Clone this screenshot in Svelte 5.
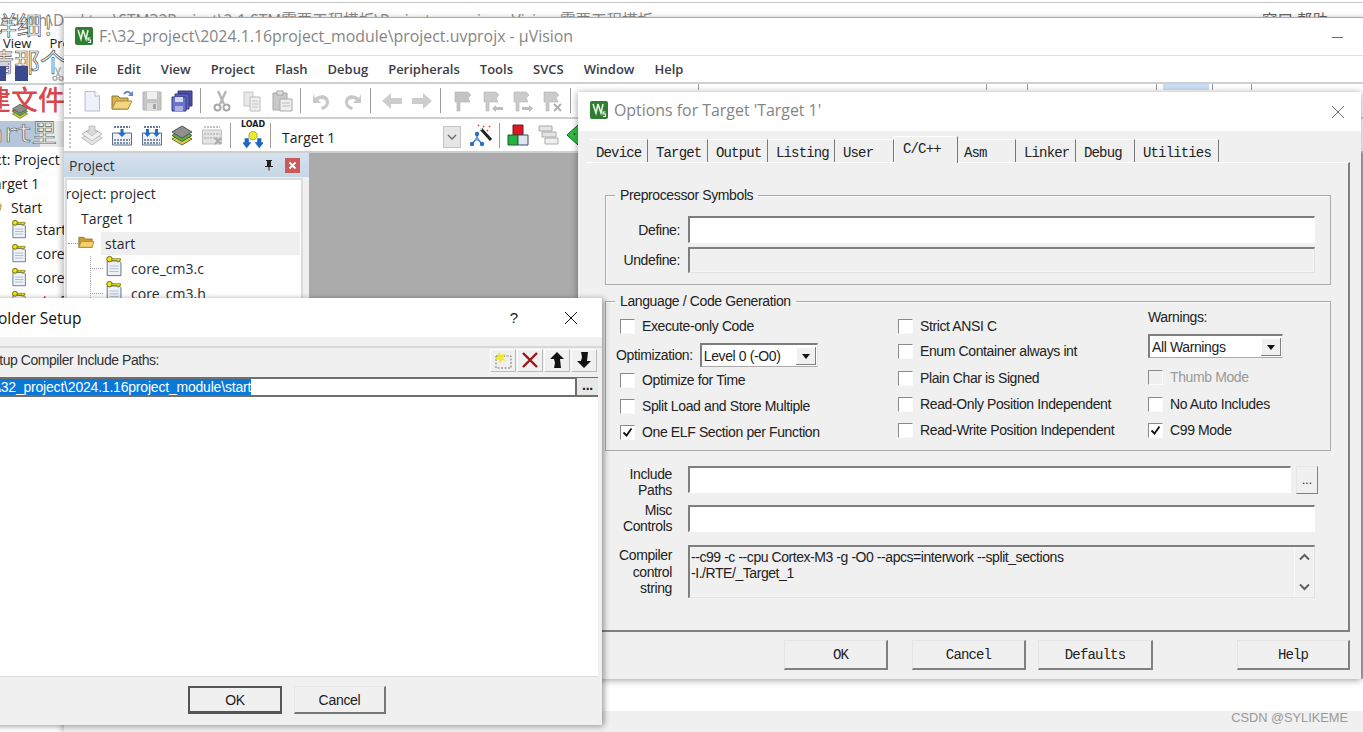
<script>
  const icons = {
    doc: '<path d="M5 2.500h10l4.500 4.500v15H5z" fill="#eef1fa" stroke="#b9bcc6"/><path d="M15 2.500V7h4.500" fill="#fff" stroke="#b9bcc6"/>',
    open: '<path d="M2 20V7h6l2 2h8v11z" fill="#d9b253" stroke="#8d7434"/><path d="M2 20l4-8h16l-4 8z" fill="#f5d67c" stroke="#a38a45"/><path d="M14 5c2-3 5-3 7 0" fill="none" stroke="#5f86c8" stroke-width="2"/><path d="M23 2v5h-5z" fill="#5f86c8"/>',
    save: '<path d="M3 3h18v18H3z" fill="#c4c4c4" stroke="#b2b2b2"/><path d="M7 3h10v7H7z" fill="#efefef"/><path d="M7 14h10v7H7z" fill="#dedede"/><path d="M13 15h3v5h-3z" fill="#a6a6a6"/>',
    saveall: '<path d="M8 2h14v15H8z" fill="#4b4fa8" stroke="#35387e"/><path d="M5 5h14v15H5z" fill="#5f64bd" stroke="#35387e"/><path d="M2 8h14v14H2z" fill="#6d72c9" stroke="#35387e"/><path d="M5 8h8v5H5z" fill="#d6d8f2"/><path d="M5 17h8v5H5z" fill="#adb0e2"/>',
    cut: '<path d="M8 2l6 13M16 2l-6 13" stroke="#b5b5b5" stroke-width="2.400" fill="none"/><circle cx="7.500" cy="18.500" r="3" fill="none" stroke="#a8a8a8" stroke-width="2"/><circle cx="16.500" cy="18.500" r="3" fill="none" stroke="#a8a8a8" stroke-width="2"/>',
    copy: '<path d="M4 3h9v14H4z" fill="#e9e9e9" stroke="#c6c6c6"/><path d="M10 8h10v14H10z" fill="#efefef" stroke="#bcbcbc"/><path d="M12 12h6M12 15h6M12 18h6" stroke="#c2c2c2"/>',
    paste: '<path d="M3 4h14v17H3z" fill="#c9c9c9" stroke="#a9a9a9"/><path d="M7 2h6v4H7z" fill="#e5e5e5" stroke="#a3a3a3"/><path d="M10 10h12v12H10z" fill="#eee" stroke="#a9a9a9"/><path d="M12 14h8M12 17h8" stroke="#bbb"/>',
    undo: '<path d="M5 9c6-5 14-3 14 4 0 4-3 7-7 8l-1-3c3-1 5-2 5-5 0-3-5-4-8-2l3 3H3V5z" fill="#c8c8c8"/>',
    redo: '<path d="M19 9c-6-5-14-3-14 4 0 4 3 7 7 8l1-3c-3-1-5-2-5-5 0-3 5-4 8-2l-3 3h8V5z" fill="#c8c8c8"/>',
    left: '<path d="M2 12l9-8v5h11v6H11v5z" fill="#cdcdcd"/>',
    right: '<path d="M22 12l-9-8v5H2v6h11v5z" fill="#cdcdcd"/>',
    mark: '<path d="M5 3h13l3 3-3 3 2 4H10v9H7V13H5z" fill="#c4c4c4" stroke="#b2b2b2" stroke-width=".6"/>',
    markp: '<path d="M4 3h12l3 3-3 3 2 4H9v9H6V13H4z" fill="#cbcbcb" stroke="#b2b2b2" stroke-width=".6"/><path d="M23 18h-7v-2l-4 3.500 4 3.500v-2h7z" fill="#bdbdbd"/>',
    markn: '<path d="M4 3h12l3 3-3 3 2 4H9v9H6V13H4z" fill="#cbcbcb" stroke="#b2b2b2" stroke-width=".6"/><path d="M12 18h7v-2l4 3.500-4 3.500v-2h-7z" fill="#bdbdbd"/>',
    markx: '<path d="M4 3h12l3 3-3 3 2 4H9v9H6V13H4z" fill="#cbcbcb" stroke="#b2b2b2" stroke-width=".6"/><path d="M14 15l7 7M21 15l-7 7" stroke="#b0b0b0" stroke-width="2"/>',
    xlate: '<path d="M2 15l10-6 10 6-10 7z" fill="#e6e6e6" stroke="#bbb"/><path d="M2 11l10-6 10 6-10 7z" fill="#efefef" stroke="#bbb"/><path d="M9 3h6v5h3l-6 5-6-5h3z" fill="#dadada" stroke="#aaa" stroke-width=".6"/>',
    build: '<path d="M2.500 10h19v12h-19z" fill="#eef2f8" stroke="#5a6f8c"/><path d="M4 4h16" stroke="#6a7a95" stroke-width="2" stroke-dasharray="2 1"/><path d="M4 17h16M4 20h16" stroke="#8090a8" stroke-width="2" stroke-dasharray="2 1"/><path d="M12 14l-4-4h2.500V6h3v4H16z" fill="#1f6fc9"/>',
    rebuild: '<path d="M2.500 10h19v12h-19z" fill="#eef2f8" stroke="#5a6f8c"/><path d="M4 4h16" stroke="#6a7a95" stroke-width="2" stroke-dasharray="2 1"/><path d="M4 17h16M4 20h16" stroke="#8090a8" stroke-width="2" stroke-dasharray="2 1"/><path d="M7.500 14l-3.500-4h2V6h3v4h2zM16.500 14l-3.500-4h2V6h3v4h2z" fill="#1f6fc9"/>',
    batch: '<path d="M2 16l10-6 10 6-10 6z" fill="#d9c84a" stroke="#6b6f2c"/><path d="M2 12.500l10-6 10 6-10 6z" fill="#63a84e" stroke="#3f6e33"/><path d="M2 9l10-6 10 6-10 6z" fill="#8f8f8f" stroke="#555"/>',
    stop: '<path d="M2.500 7h19v14h-19z" fill="#e4e4e4" stroke="#bdbdbd"/><path d="M4 4h16M4 11h16M4 15h16" stroke="#c4c4c4" stroke-width="2" stroke-dasharray="2 1"/><path d="M15 15l6 6M21 15l-6 6" stroke="#aaa" stroke-width="2"/>',
    wand: '<path d="M12 6l10 11" stroke="#222" stroke-width="3"/><path d="M11 6h2" stroke="#ddd" stroke-width="2"/><path d="M14 3l1 1M20 3l1 1M18 7l1 1M9 2l1 1" stroke="#d33" stroke-width="1.600"/><path d="M8 10v5M3 21l5-6 5 6" fill="none" stroke="#2e6fbf" stroke-width="1.400"/><circle cx="8" cy="11" r="2.200" fill="#2e6fbf"/><circle cx="3" cy="21" r="2.200" fill="#2e6fbf"/><circle cx="13" cy="21" r="2.200" fill="#2e6fbf"/><circle cx="8" cy="16" r="1.800" fill="#6ea1da"/>',
    blocks: '<path d="M7 2h10v10H7z" fill="#e3141c" stroke="#5c2530"/><path d="M2 12h10v10H2z" fill="#27b33b" stroke="#1d5a2b"/><path d="M12 12h10v10H12z" fill="#dfe6f0" stroke="#3a4b66"/>',
    books: '<path d="M3 3h13v5H3z" fill="#e4e4e4" stroke="#aaa"/><path d="M6 9h14v5H6z" fill="#e4e4e4" stroke="#aaa"/><path d="M9 15h13v6H9z" fill="#efefef" stroke="#aaa"/>',
    load: '<path d="M12 3a5 5 0 110 10 5 5 0 010-10z" fill="#ecec2a" stroke="#9a9a20"/><path d="M2 11h5v5h3l-5.500 7L-1 16h3zM17 11h5v5h3l-5.500 7L14 16h3z" fill="#1f66c4"/>',
    rhomb: '<path d="M12 2l11 10-11 10L1 12z" fill="#27c43c" stroke="#0e5c1a"/><path d="M8 11h1M12 7h1M12 15h1M16 11h1" stroke="#000" stroke-width="2"/>',
    key: '<path d="M3.500 6.500h13l2 2v14h-15z" fill="#eef1f8" stroke="#55678a"/><path d="M6 12h10M6 15h10M6 18h10" stroke="#b8c0cf" stroke-width="1.200"/><circle cx="6" cy="4.500" r="3" fill="#f5e50c" stroke="#5c5a10"/><path d="M8.500 4h9.500v2h-1.500v1.500h-2V6H8.500z" fill="#f5e50c" stroke="#5c5a10" stroke-width=".7"/>',
    folder: '<path d="M1 16V4h6l2 2h8v10z" fill="#c99a38" stroke="#8a6d2c"/><path d="M1 16l3-7h15l-2 7z" fill="#f6cf6a" stroke="#a8853a"/>',
    tNew: '<path d="M3 6h15v12H3z" fill="none" stroke="#777" stroke-dasharray="2 1.500"/><path d="M6 1l2 4 4-1-2 4 3 3-4-1-2 4-1-4-4-1 3-3z" fill="#ecec2a"/>',
    tDel: '<path d="M3 3l14 14M17 3L3 17" stroke="#9c1616" stroke-width="2.400"/>',
    tUp: '<path d="M10 2l7 7h-4l1 9H7l1-5-1-4H3z" fill="#111"/>',
    tDown: '<path d="M10 18l7-7h-4l1-9H7l1 5-1 4H3z" fill="#111"/>'
  };
  const groups1 = [['doc','open','save','saveall'],['cut','copy','paste'],['undo','redo'],['left','right'],['mark','markp','markn','markx']];
  const hidden = [118, 287, 40, 128, 6, 3, 38];
  const tabs = [['Device',58],['Target',60],['Output',60],['Listing',67],['User',59],['C/C++',64],['Asm',58],['Linker',60],['Debug',59],['Utilities',84]];
  const menu = ['File','Edit','View','Project','Flash','Debug','Peripherals','Tools','SVCS','Window','Help'];
</script>

{#snippet ic(name, size = 24)}
  <svg class="ic" width={size} height={size} viewBox="0 0 24 24" aria-hidden="true">{@html icons[name]}</svg>
{/snippet}

{#snippet tool(name)}
  <svg class="ic" width="20" height="20" viewBox="0 0 20 20" aria-hidden="true">{@html icons[name]}</svg>
{/snippet}

{#snippet logo()}
  <svg class="logo" width="18" height="18" viewBox="0 0 18 18" aria-hidden="true">
    <rect width="18" height="18" rx="2" fill="#2f7d32"/>
    <path d="M3 3l3 9 2-9M8 3l3 9 2-9" fill="none" stroke="#dff0d8" stroke-width="1.600"/>
    <path d="M15.500 11h-2.500v2h2.500v2.500H13" fill="none" stroke="#fff" stroke-width="1.100"/>
  </svg>
{/snippet}

{#snippet check(label, on = false, off = false)}
  <div class="chk" class:off>
    <span class="box">{#if on}<svg width="11" height="11" viewBox="0 0 11 11" aria-hidden="true"><path d="M1.500 5.500l3 3 5-7" fill="none" stroke="#111" stroke-width="1.800"/></svg>{/if}</span>
    <span>{label}</span>
  </div>
{/snippet}

<div class="desktop">
  <!-- window behind everything -->
  <div class="back">
    <div class="back-rule"></div>
    <div class="back-title">C:\Users\Admin\Desktop\STM32Project\2-1 STM需要工程模板\Project.uvprojx - µVision</div>
    <div class="back-extra a">需要工程模板</div>
    <div class="back-extra b">窗口 帮助</div>
    <div class="back-menu"><span>View</span><span>Project</span></div>
    <div class="cap c1">详细！</div>
    <div class="cap c2">清那个</div>
    <div class="strip-icons">
      <span class="mini"></span><span class="mini"></span>
      <span class="backcut">{@render ic('cut', 16)}</span>
    </div>
    <div class="back-line"></div>
    <div class="cap c3">建文件</div>
    <div class="cross">{@render ic('batch', 18)}</div>
    <div class="cap c4">Start里</div>
    <div class="back-tree">
      <div class="bt t1">Project: Project</div>
      <div class="bt t2">Target 1</div>
      <div class="bt t3">{@render ic('folder', 17)}<span>Start</span></div>
      <div class="bt t4">{@render ic('key', 20)}<span>startup</span></div>
      <div class="bt t5">{@render ic('key', 20)}<span>core_cm3</span></div>
      <div class="bt t6">{@render ic('key', 20)}<span>core_cm3</span></div>
      <div class="bt t7">{@render ic('key', 20)}<span>stm32</span></div>
    </div>
  </div>

  <!-- µVision main window -->
  <section class="main">
    <header class="titlebar">
      {@render logo()}
      <span class="titletext">F:\32_project\2024.1.16project_module\project.uvprojx - µVision</span>
      <span class="minimize"></span>
    </header>
    <nav class="menu">{#each menu as m}<span>{m}</span>{/each}</nav>
    <div class="toolbar t-one">
      <span class="grip"></span>
      {#each groups1 as g}
        {#each g as n}{@render ic(n)}{/each}
        <span class="sep"></span>
      {/each}
      {#each hidden as w, i}
        <span class="sep far" class:hot={i === 4} style="margin-left:{w}px"></span>
      {/each}
    </div>
    <div class="toolbar t-two">
      <span class="grip"></span>
      {@render ic('xlate')}
      {@render ic('build')}
      {@render ic('rebuild')}
      {@render ic('batch')}
      {@render ic('stop')}
      <span class="sep"></span>
      <span class="loadbtn"><b>LOAD</b>{@render ic('load', 20)}</span>
      <span class="sep"></span>
      <span class="target">Target 1</span>
      <span class="drop"><svg width="10" height="6" viewBox="0 0 10 6" aria-hidden="true"><path d="M1 1l4 4 4-4" fill="none" stroke="#666" stroke-width="1.300"/></svg></span>
      {@render ic('wand')}
      <span class="sep tight"></span>
      {@render ic('blocks')}
      {@render ic('books')}
      {@render ic('rhomb')}
    </div>
    <div class="workspace">
      <aside class="panel">
        <div class="panelhead">
          <span>Project</span>
          <svg class="pin" width="12" height="12" viewBox="0 0 12 12" aria-hidden="true"><path d="M3 1h6v1H8v5h2v1H6.500v3.500h-1V8H2V7h2V2H3z" fill="#222"/></svg>
          <span class="redx"><svg width="9" height="9" viewBox="0 0 9 9" aria-hidden="true"><path d="M1.500 1.500l6 6M7.500 1.500l-6 6" stroke="#fff" stroke-width="1.800"/></svg></span>
        </div>
        <div class="tree">
          <div class="node n0">Project: project</div>
          <div class="node n1">Target 1</div>
          <div class="node n2"><span class="plus"></span>{@render ic('folder', 20)}<span class="hl">start</span></div>
          <div class="node n3"><span class="dots"></span>{@render ic('key', 22)}<span>core_cm3.c</span></div>
          <div class="node n3"><span class="dots"></span>{@render ic('key', 22)}<span>core_cm3.h</span></div>
        </div>
      </aside>
      <div class="graybg"></div>
    </div>
    <div class="output"></div>
    <div class="status"><span class="csdn">CSDN @SYLIKEME</span></div>
  </section>

  <!-- Options dialog -->
  <section class="options">
    <header class="opt-title">
      {@render logo()}
      <span class="titletext">Options for Target 'Target 1'</span>
      <svg class="closex" width="14" height="14" viewBox="0 0 14 14" aria-hidden="true"><path d="M1 1l12 12M13 1L1 13" stroke="#6a6a6a" stroke-width="1"/></svg>
    </header>
    <div class="opt-body">
      <div class="tabs">
        {#each tabs as [t, w]}
          <span class="tab" class:sel={t === 'C/C++'} class:nar={t === 'Device' || t === 'Asm'} style="width:{w}px">{t}</span>
        {/each}
      </div>
      <div class="tabpanel">
        <fieldset class="g1">
          <legend>Preprocessor Symbols</legend>
          <div class="frow"><label for="d">Define:</label><div id="d" class="inp"></div></div>
          <div class="frow second"><label for="u">Undefine:</label><div id="u" class="inp dis"></div></div>
        </fieldset>
        <fieldset class="g2">
          <legend>Language / Code Generation</legend>
          <div class="cols">
            <div class="col c-a">
              <div class="in">{@render check('Execute-only Code')}</div>
              <div class="optline m9">
                <span>Optimization:</span>
                <div class="combo lvl"><span>Level 0 (-O0)</span><i class="arrow"></i></div>
              </div>
              <div class="in m5">{@render check('Optimize for Time')}</div>
              <div class="in m10">{@render check('Split Load and Store Multiple')}</div>
              <div class="in m10">{@render check('One ELF Section per Function', true)}</div>
            </div>
            <div class="col c-b">
              {@render check('Strict ANSI C')}
              <div class="m9">{@render check('Enum Container always int')}</div>
              <div class="m11">{@render check('Plain Char is Signed')}</div>
              <div class="m10">{@render check('Read-Only Position Independent')}</div>
              <div class="m10">{@render check('Read-Write Position Independent')}</div>
            </div>
            <div class="col c-c">
              <div class="warn">Warnings:</div>
              <div class="combo all m9"><span>All Warnings</span><i class="arrow"></i></div>
              <div class="m11">{@render check('Thumb Mode', false, true)}</div>
              <div class="m11">{@render check('No Auto Includes')}</div>
              <div class="m10">{@render check('C99 Mode', true)}</div>
            </div>
          </div>
        </fieldset>
        <div class="lrow include">
          <div class="rlabel">Include<br />Paths</div>
          <div class="inp grow"></div>
          <button class="dots-btn">...</button>
        </div>
        <div class="lrow misc">
          <div class="rlabel">Misc<br />Controls</div>
          <div class="inp grow"></div>
        </div>
        <div class="lrow ctl">
          <div class="rlabel">Compiler<br />control<br />string</div>
          <div class="inp dis grow area">
            <div class="areatext">--c99 -c --cpu Cortex-M3 -g -O0 --apcs=interwork --split_sections<br />-I./RTE/_Target_1</div>
            <div class="scroll">
              <svg width="11" height="8" viewBox="0 0 11 8" aria-hidden="true"><path d="M1 6.500l4.500-4.500 4.500 4.500" fill="none" stroke="#606060" stroke-width="2"/></svg>
              <svg width="11" height="8" viewBox="0 0 11 8" aria-hidden="true"><path d="M1 1.500l4.500 4.500 4.500-4.500" fill="none" stroke="#606060" stroke-width="2"/></svg>
            </div>
          </div>
        </div>
      </div>
      <div class="opt-foot">
        <button class="mono w-ok">OK</button>
        <button class="mono w-cancel">Cancel</button>
        <button class="mono w-def">Defaults</button>
        <button class="mono w-help">Help</button>
      </div>
    </div>
  </section>

  <!-- Folder Setup dialog -->
  <section class="folder">
    <header class="fold-title">
      <span class="fold-name">Folder Setup</span>
      <span class="q">?</span>
      <svg width="14" height="14" viewBox="0 0 14 14" aria-hidden="true"><path d="M1 1l12 12M13 1L1 13" stroke="#111" stroke-width="1"/></svg>
    </header>
    <div class="fold-bar">
      <span class="fold-label">Setup Compiler Include Paths:</span>
      <div class="toolbtns">
        <span class="tb">{@render tool('tNew')}</span>
        <span class="tb">{@render tool('tDel')}</span>
        <span class="tb">{@render tool('tUp')}</span>
        <span class="tb">{@render tool('tDown')}</span>
      </div>
    </div>
    <div class="pathrow">
      <span class="selected">F:\32_project\2024.1.16project_module\start</span>
      <span class="more">...</span>
    </div>
    <div class="listarea"></div>
    <footer class="fold-foot">
      <button class="fb def">OK</button>
      <button class="fb">Cancel</button>
    </footer>
  </section>
</div>

<style>
  :global(body) { margin: 0; background: #fff; }
  .desktop {
    position: relative;
    width: 1363px;
    height: 732px;
    overflow: hidden;
    background: #fff;
    font-family: "Liberation Sans", Arial, sans-serif;
    color: #1b1b1b;
  }
  .ic { display: block; flex: none; }
  button { font: inherit; color: inherit; padding: 0; }

  /* back window */
  .back { position: absolute; inset: 0; overflow: hidden; }
  .back-rule { position: absolute; left: 0; right: 0; top: 2px; height: 1px; background: #c6c6c6; }
  .back-title, .back-extra { position: absolute; top: 8px; font: 15.500px "Open Sans", "Noto Sans CJK SC", sans-serif; color: #8a8a8a; white-space: nowrap; }
  .back-title { left: -66px; }
  .back-extra.a { left: 560px; }
  .back-extra.b { left: 1262px; color: #666; }
  .back-menu { position: absolute; left: 3px; top: 34px; font: 13px "Open Sans", sans-serif; display: flex; gap: 18px; white-space: nowrap; }
  .cap { position: absolute; font-family: "Noto Sans CJK SC", sans-serif; white-space: nowrap; line-height: 1; }
  .c1 { left: -8px; top: 12px; font-size: 25px; color: #fff; -webkit-text-stroke: .7px #555; }
  .c2 { left: -12px; top: 48px; font-size: 26px; color: #fff; -webkit-text-stroke: .7px #555; }
  .strip-icons { position: absolute; left: -7px; top: 66px; display: flex; gap: 9px; }
  .mini { width: 13px; height: 15px; background: #3b4a8e; }
  .backcut { margin-left: 13px; }
  .back-line { position: absolute; left: 0; width: 64px; top: 83px; height: 2px; background: #d0d0d0; }
  .c3 { left: -16px; top: 85px; font-size: 27px; font-weight: 500; color: #d8484c; }
  .cross { position: absolute; left: 11px; top: 102px; }
  .c4 { left: -41px; top: 121px; width: 105px; height: 26px; line-height: 26px; font-size: 25px; background: linear-gradient(to right, #b6c6da 81px, #e9e9e9 81px); color: #eef1f5; -webkit-text-stroke: .7px #566; font-family: "DejaVu Sans Mono", "Noto Sans CJK SC", monospace; letter-spacing: -.5px; }
  .back-tree { position: absolute; left: 0; top: 147px; right: 0; bottom: 0; background: #fff; }
  .bt { position: absolute; font: 14px "Open Sans", sans-serif; display: flex; align-items: center; gap: 6px; white-space: nowrap; }
  .t1 { left: -39px; top: 3px; }
  .t2 { left: -14px; top: 27px; }
  .t3 { left: -12px; top: 51px; }
  .t4 { left: 10px; top: 72px; }
  .t5 { left: 10px; top: 96px; }
  .t6 { left: 10px; top: 120px; }
  .t7 { left: 10px; top: 143px; }

  /* main window */
  .main {
    position: absolute;
    left: 64px; top: 17px; right: -6px; bottom: 0;
    display: flex;
    flex-direction: column;
    background: #fff;
    border-top: 1px solid #a9a9a9;
    box-shadow: -3px 0 5px rgba(0, 0, 0, .22);
  }
  .titlebar { display: flex; align-items: center; padding: 0 0 2px 11px; gap: 6px; border-bottom: 1px solid #e0e0e0; flex: none; position: relative; height: 35px; }
  .titletext { font: 15.900px "Open Sans", sans-serif; color: #858585; white-space: nowrap; }
  .minimize { position: absolute; right: 26px; top: 19px; width: 11px; height: 1px; background: #6a6a6a; }
  .menu { height: 26px; flex: none; display: flex; align-items: center; gap: 20px; padding-left: 11px; font: 600 13px "Open Sans", sans-serif; color: #3c3c46; }
  .toolbar { flex: none; display: flex; align-items: center; gap: 6px; background: #fff; border-top: 2px solid #cfcfcf; box-sizing: border-box; }
  .t-one { height: 35px; }
  .t-two { height: 34px; }
  .grip { width: 2px; height: 26px; margin: 0 1px 0 5px; border-left: 2px dotted #c4c4c4; }
  .sep { width: 1px; height: 25px; background: #9c9c9c; margin-right: 3px; flex: none; }
  .sep.tight { margin-right: 0; }
  .far { height: 6px; align-self: flex-start; margin-right: -6px; }
  .hot { width: 46px; background: #c9def4; }
  .loadbtn { width: 24px; height: 30px; display: flex; flex-direction: column; align-items: center; margin: 0 -1px 0 1px; }
  .loadbtn b { font: 700 8px "DejaVu Sans", sans-serif; letter-spacing: 0; line-height: 9px; }
  .target { width: 155px; margin-left: 2px; padding-top: 5px; font: 14px "Open Sans", sans-serif; }
  .drop { width: 18px; height: 22px; box-sizing: border-box; background: #e6e6e6; border: 1px solid #c4c4c4; display: flex; align-items: center; justify-content: center; margin: 3px 2px 0 0; }
  .workspace { flex: 1; display: flex; min-height: 0; border-top: 2px solid #cfcfcf; }
  .panel { width: 245px; flex: none; background: #f0f0f0; }
  .panelhead { height: 24px; display: flex; align-items: center; padding: 0 4px 0 5px; background: linear-gradient(#d6e1ee, #c6d6e6); font: 14px "Open Sans", sans-serif; color: #333; }
  .panelhead > span:first-child { flex: 1; }
  .pin { margin-right: 10px; }
  .redx { width: 15px; height: 15px; background: #cb5b5b; display: flex; align-items: center; justify-content: center; margin-right: 5px; }
  .tree { margin: 1px 6px 0 1px; background: #fff; border: 2px solid #dcdcdc; height: 400px; overflow: hidden; padding-top: 1px; }
  .node { height: 25px; display: flex; align-items: center; font: 14px "Open Sans", sans-serif; white-space: nowrap; color: #2a2a32; }
  .n0 { margin-left: -10px; }
  .n1 { margin-left: 14px; }
  .n2 { padding-left: 1px; }
  .plus { width: 10px; border-top: 1px dotted #999; flex: none; }
  .hl { flex: 1; background: #efefef; height: 23px; line-height: 23px; margin: 0 1px 0 3px; padding-left: 4px; }
  .n3 { padding-left: 23px; }
  .dots { width: 13px; align-self: stretch; background: linear-gradient(#aaa 50%, transparent 0) left top / 1px 2px repeat-y; position: relative; margin-right: 1px; }
  .dots::after { content: ""; position: absolute; left: 0; right: 0; top: 12px; border-top: 1px dotted #999; }
  .n3 svg { margin-right: 5px; margin-top: -6px; }
  .graybg { flex: 1; background: #ababab; }
  .output { height: 32px; flex: none; background: #fff; }
  .status { height: 21px; flex: none; background: #f0f0f0; position: relative; }
  .csdn { position: absolute; right: 21px; top: 0; font-size: 12.800px; line-height: 13px; color: #9a9a9a; }

  /* options */
  .options {
    position: absolute;
    left: 578px; top: 92px;
    width: 783px; height: 587px;
    background: #f0f0f0;
    box-shadow: 0 1px 7px rgba(0, 0, 0, .4);
    display: flex;
    flex-direction: column;
    font-size: 14px;
    letter-spacing: -.38px;
    color: #222;
  }
  .opt-title { height: 39px; background: #fff; display: flex; align-items: center; padding: 0 0 3px 12px; gap: 6px; flex: none; box-sizing: border-box; }
  .opt-title .titletext { letter-spacing: 0; }
  .closex { margin: 3px 16px 0 auto; }
  .opt-body { flex: 1; padding-top: 8px; display: flex; flex-direction: column; min-height: 0; }
  .tabs { display: flex; height: 23px; padding-left: 12px; font: 14px/26px "Liberation Mono", monospace; letter-spacing: -.85px; }
  .tab { box-sizing: border-box; padding-left: 8px; height: 23px; border-right: 1px solid #777; background: #f0f0f0; border-top: 1px solid #fff; white-space: nowrap; }
  .tab.nar { padding-left: 6px; }
  .tab.sel { border-left: 1px solid #fff; line-height: 24px; height: 27px; margin-top: -3px; position: relative; z-index: 1; }
  .tabpanel { height: 470px; margin-left: 8px; width: 764px; box-sizing: border-box; flex: none; padding: 24px 0 0 19px; border-top: 1px solid #fff; border-right: 2px solid #808080; border-bottom: 2px solid #808080; }
  fieldset { margin: 0 17px 0 0; padding: 0; border: 1px solid #ababab; min-width: 0; box-shadow: inset 1px 1px 0 #fafafa; }
  legend { margin-left: 9px; padding: 0 5px; font-size: 14px; line-height: 16px; }
  .g1 { padding: 13px 15px 11px 0; }
  .g2 { margin-top: 8px; height: 158px; box-sizing: border-box; }
  .frow { display: flex; align-items: center; gap: 8px; height: 27px; }
  .frow.second { margin-top: 4px; height: 26px; }
  .frow label { width: 74px; text-align: right; flex: none; }
  .inp { flex: 1; align-self: stretch; background: #fff; border-style: solid; border-width: 2px 1px 1px 2px; border-color: #7e7e7e #fff #fff #7e7e7e; box-sizing: border-box; }
  .inp.dis { background: #f0f0f0; border-right-color: #e2e2e2; border-bottom-color: #e2e2e2; box-shadow: inset 0 0 0 1px #f4f4f4; }
  .cols { display: flex; padding-left: 10px; }
  .col { display: flex; flex-direction: column; flex: none; }
  .c-a { width: 282px; padding-top: 9px; }
  .c-b { width: 250px; padding-top: 9px; }
  .c-c { width: 170px; }
  .in { padding-left: 4px; }
  .m5 { margin-top: 5px; }
  .m9 { margin-top: 9px; }
  .m10 { margin-top: 10px; }
  .m11 { margin-top: 11px; }
  .chk { display: flex; align-items: center; height: 16px; gap: 7px; white-space: nowrap; }
  .chk.off { color: #9a9a9a; }
  .box { width: 15px; height: 15px; box-sizing: border-box; border: 1px solid; border-color: #8a8a8a #fbfbfb #fbfbfb #8a8a8a; background: #fff; display: flex; align-items: center; justify-content: center; flex: none; }
  .chk.off .box { background: #f0f0f0; }
  .optline { display: flex; align-items: center; gap: 7px; height: 24px; white-space: nowrap; }
  .combo { height: 24px; box-sizing: border-box; background: #fff; border-style: solid; border-width: 2px 1px 1px 2px; border-color: #7e7e7e #e6e6e6 #aaa #7e7e7e; display: flex; align-items: center; padding-left: 2px; justify-content: space-between; }
  .lvl { width: 118px; }
  .all { width: 135px; }
  .warn { height: 16px; line-height: 16px; }
  .arrow { width: 20px; height: 18px; margin-right: 1px; background: #f0f0f0; box-shadow: inset -1px -1px 0 #808080, inset 1px 1px 0 #fff; position: relative; }
  .arrow::after { content: ""; position: absolute; left: 6px; top: 7px; border: 4px solid transparent; border-top: 5px solid #111; border-bottom: 0; }
  .lrow { display: flex; gap: 16px; padding-right: 16px; margin-right: 17px; box-sizing: border-box; }
  .rlabel { width: 67px; flex: none; text-align: right; line-height: 16px; }
  .grow { flex: 1; }
  .include { height: 28px; margin-top: 15px; align-items: flex-start; }
  .include .inp { height: 27px; flex: 1; align-self: auto; }
  .dots-btn { width: 22px; height: 28px; flex: none; margin: 0 -3px 0 -11px; background: #f0f0f0; border: 1px solid; border-color: #e6e6e6 #808080 #808080 #e6e6e6; font-size: 12px; line-height: 22px; }
  .misc { height: 27px; margin-top: 11px; }
  .misc .rlabel { margin-top: -3px; }
  .ctl { height: 53px; margin-top: 13px; }
  .ctl .rlabel { line-height: 16.500px; margin-top: 2px; }
  .area { display: flex; justify-content: space-between; }
  .areatext { padding: 2px 0 0 1px; line-height: 16px; white-space: nowrap; letter-spacing: -.44px; }
  .scroll { width: 20px; border-left: 1px solid #fafafa; display: flex; flex-direction: column; align-items: center; justify-content: space-between; padding: 6px 0 6px; box-sizing: border-box; }
  .opt-foot { display: flex; padding: 8px 0 0 206px; }
  .mono { height: 30px; box-sizing: border-box; background: #f0f0f0; border: 1px solid; border-color: #e4e4e4 #808080 #808080 #e4e4e4; border-width: 1px 2px 2px 1px; font: 14px "Liberation Mono", monospace; letter-spacing: -.85px; }
  .w-ok { width: 104px; padding-left: 10px; }
  .w-cancel { width: 114px; margin-left: 24px; }
  .w-def { width: 115px; margin-left: 12px; }
  .w-help { width: 113px; margin-left: 84px; }

  /* folder */
  .folder {
    position: absolute;
    left: -89px; top: 298px;
    width: 691px; height: 427px;
    background: #f0f0f0;
    display: flex;
    flex-direction: column;
    box-shadow: 2px 1px 6px rgba(0, 0, 0, .4);
    font-size: 14px;
  }
  .fold-title { height: 39px; flex: none; background: #fff; display: flex; align-items: center; padding: 0 24px 0 79px; box-sizing: border-box; }
  .fold-name { flex: 1; font: 15.500px "Open Sans", sans-serif; color: #111; }
  .q { font: 15px "Liberation Sans", sans-serif; margin-right: 46px; }
  .fold-bar { height: 24px; padding: 0 5px 3px 72px; flex: none; margin-top: 9px; border-top: 2px solid #d8d8d8; display: flex; align-items: center; justify-content: space-between; }
  .fold-label { color: #333; letter-spacing: -.45px; }
  .toolbtns { display: flex; }
  .tb { width: 26px; height: 23px; margin-left: 1px; background: #f0f0f0; box-sizing: border-box; border: 1px solid; border-color: #fff #bbb #bbb #fff; display: flex; align-items: center; justify-content: center; }
  .pathrow { height: 20px; flex: none; margin: 2px 4px 0 0; background: #fff; border-top: 2px solid #6f6f6f; border-bottom: 2px solid #6f6f6f; box-sizing: border-box; display: flex; align-items: center; padding-left: 74px; position: relative; white-space: nowrap; letter-spacing: -.2px; }
  .selected { background: #0a78d7; color: #fff; line-height: 16px; }
  .more { position: absolute; right: 0; top: -1px; width: 21px; height: 17px; background: #e8e8e8; border-left: 2px solid #6f6f6f; font: 700 14px/15px "Liberation Sans", sans-serif; text-align: center; }
  .listarea { flex: 1; background: #fff; margin-right: 4px; border-bottom: 1px solid #dcdcdc; }
  .fold-foot { height: 39px; flex: none; display: flex; padding: 9px 0 0 277px; gap: 12px; }
  .fb { width: 92px; height: 28px; box-sizing: border-box; background: #f0f0f0; border: 1px solid; border-color: #e8e8e8 #777 #777 #e8e8e8; border-width: 1px 2px 2px 1px; font-family: "Liberation Sans", sans-serif; font-size: 14px; letter-spacing: -.3px; }
  .fb.def { width: 94px; border: 2px solid #555; border-bottom-width: 3px; }
</style>
